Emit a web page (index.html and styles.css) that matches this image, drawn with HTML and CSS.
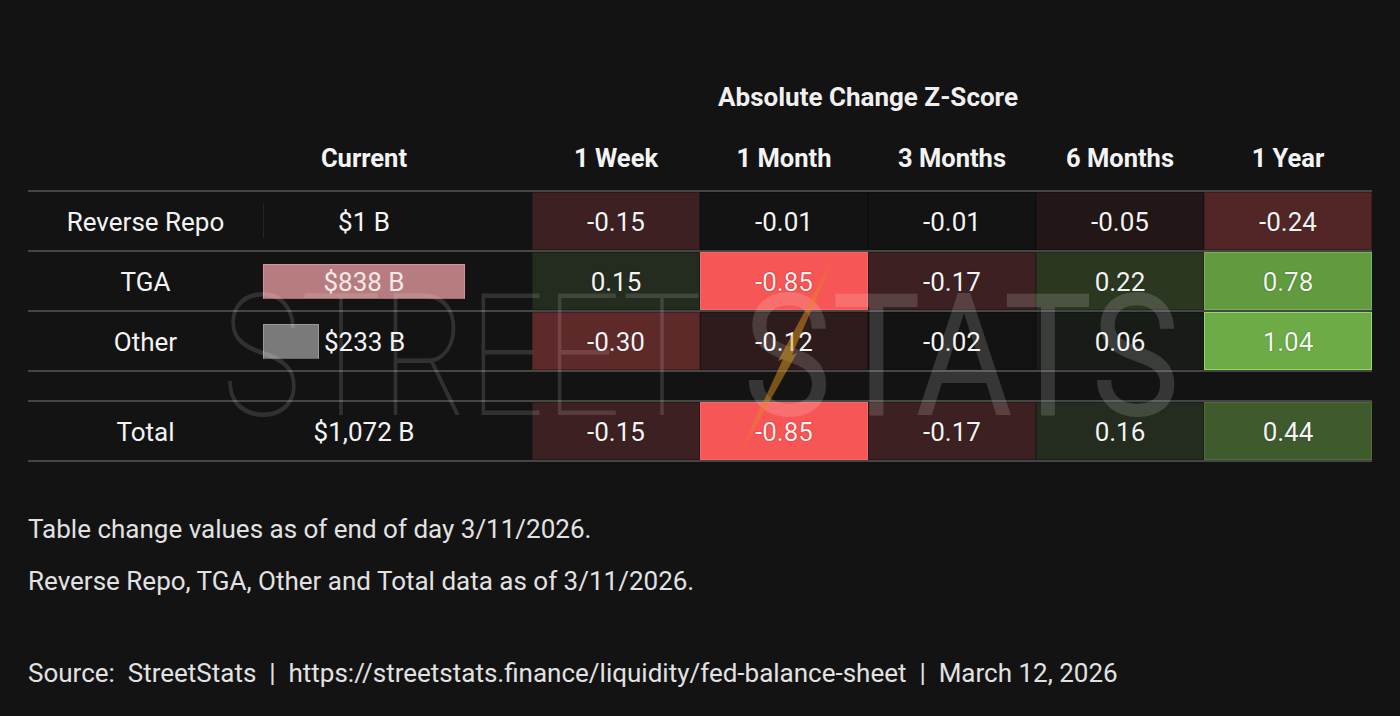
FILE: index.html
```html
<!DOCTYPE html>
<html lang="en">
<head>
<meta charset="utf-8">
<title>Fed Balance Sheet Liquidity</title>
<link rel="stylesheet" href="styles.css">
</head>
<body>
<div class="page">
  <div class="table-wrap">
    <div class="row title-row">
      <div class="title">Absolute Change Z-Score</div>
    </div>
    <div class="row head-row">
      <div class="cell"></div>
      <div class="cell">Current</div>
      <div class="cell"></div>
      <div class="cell">1 Week</div>
      <div class="cell">1 Month</div>
      <div class="cell">3 Months</div>
      <div class="cell">6 Months</div>
      <div class="cell">1 Year</div>
    </div>

    <div class="row data-row">
      <div class="cell label">Reverse Repo</div>
      <div class="cell current"><span class="zero-bar"></span><span class="cur-text">$1 B</span></div>
      <div class="cell"></div>
      <div class="cell z z-neg2">-0.15</div>
      <div class="cell z z-neu">-0.01</div>
      <div class="cell z z-neu">-0.01</div>
      <div class="cell z z-neg1">-0.05</div>
      <div class="cell z z-neg3">-0.24</div>
    </div>

    <div class="row data-row">
      <div class="cell label">TGA</div>
      <div class="cell current"><span class="bar bar-pink">$838 B</span></div>
      <div class="cell"></div>
      <div class="cell z z-pos1">0.15</div>
      <div class="cell z z-negmax">-0.85</div>
      <div class="cell z z-neg2">-0.17</div>
      <div class="cell z z-pos2">0.22</div>
      <div class="cell z z-pos4">0.78</div>
    </div>

    <div class="row data-row">
      <div class="cell label">Other</div>
      <div class="cell current start"><span class="bar bar-gray"></span><span class="cur-text">$233 B</span></div>
      <div class="cell"></div>
      <div class="cell z z-neg4">-0.30</div>
      <div class="cell z z-neg2b">-0.12</div>
      <div class="cell z z-neu">-0.02</div>
      <div class="cell z z-pos0">0.06</div>
      <div class="cell z z-pos5">1.04</div>
    </div>

    <div class="row spacer-row"></div>

    <div class="row data-row last">
      <div class="cell label">Total</div>
      <div class="cell current"><span class="cur-text">$1,072 B</span></div>
      <div class="cell"></div>
      <div class="cell z z-neg2">-0.15</div>
      <div class="cell z z-negmax">-0.85</div>
      <div class="cell z z-neg2">-0.17</div>
      <div class="cell z z-pos1">0.16</div>
      <div class="cell z z-pos3">0.44</div>
    </div>

    <svg class="watermark" width="1400" height="500" viewBox="0 0 1400 500" aria-hidden="true">
      <defs>
        <linearGradient id="bolt" x1="0" y1="1" x2="0" y2="0">
          <stop offset="0" stop-color="#f36a2a"/>
          <stop offset="0.5" stop-color="#d9a21c"/>
          <stop offset="1" stop-color="#f36a2a"/>
        </linearGradient>
      </defs>
      <text x="222" y="343" class="wm-thin" textLength="480" lengthAdjust="spacingAndGlyphs">STREET</text>
      <text x="743" y="343" class="wm-bold" textLength="437" lengthAdjust="spacingAndGlyphs">STATS</text>
      <polygon points="836,181 792,283 797,281 737,387 783,287 778,289" fill="url(#bolt)" opacity="0.5"/>
    </svg>
  </div>

  <div class="notes">
    <p>Table change values as of end of day 3/11/2026.</p>
    <p>Reverse Repo, TGA, Other and Total data as of 3/11/2026.</p>
  </div>
  <p class="source">Source:&nbsp; StreetStats &nbsp;|&nbsp; https://streetstats.finance/liquidity/fed-balance-sheet &nbsp;|&nbsp; March 12, 2026</p>
</div>
</body>
</html>
```

FILE: styles.css
```css
html, body {
  margin: 0;
  padding: 0;
  background: #131313;
}

body {
  font-family: Roboto, "Liberation Sans", sans-serif;
  color: #f2f2f2;
  width: 1400px;
  height: 716px;
  overflow: hidden;
}

.page {
  padding: 72px 28px 0 28px;
}

.table-wrap {
  position: relative;
  width: 1344px;
}

.row {
  display: grid;
  grid-template-columns: 235px 202px 67px repeat(5, 168px);
}

.title-row {
  height: 50px;
  align-items: center;
}

.title {
  grid-column: 4 / 8;
  text-align: center;
  font-weight: 700;
  font-size: 26px;
  color: #f0f0f0;
}

.head-row {
  height: 68px;
  align-items: center;
  padding-top: 2px;
  box-sizing: border-box;
  font-weight: 700;
  color: #f0f0f0;
}

.head-row .cell {
  text-align: center;
  font-size: 25.5px;
}

.data-row {
  border-top: 2px solid #454545;
  height: 58px;
}

.data-row.last {
  border-bottom: 2px solid #454545;
}

.spacer-row {
  border-top: 2px solid #454545;
  height: 28px;
}

.cell {
  display: flex;
  align-items: center;
  justify-content: center;
  font-size: 26px;
  padding-top: 2px;
  box-sizing: border-box;
  color: #f4f4f4;
}

.current {
  position: relative;
  justify-content: center;
  padding-top: 0;
}

.current .cur-text {
  padding-top: 2px;
}

.current.start {
  justify-content: flex-start;
  gap: 5px;
}

.zero-bar {
  position: absolute;
  left: 0;
  top: 12px;
  width: 1px;
  height: 34px;
  background: #2a2220;
}

.bar {
  display: flex;
  align-items: center;
  justify-content: center;
  height: 35px;
  padding-top: 2px;
  box-sizing: border-box;
}

.bar-pink {
  width: 202px;
  background: #b77c7f;
  border: 1px solid #d49397;
  border-bottom-color: #9d6a6d;
  color: #f6e8e8;
}

.bar-gray {
  width: 56px;
  background: #7a7a7a;
  border: 1px solid #9a9a9a;
  border-bottom-color: #666;
}

.z {
  border: 1px solid rgba(0, 0, 0, 0.25);
  text-shadow: 0 0 1px rgba(0, 0, 0, 0.6);
}

.z-neu { background: #141313; }
.z-neg1 { background: #221716; }
.z-neg2 { background: #3d2021; }
.z-neg2b { background: #2e1b1b; }
.z-neg3 { background: #522626; }
.z-neg4 { background: #5e2929; }
.z-negmax {
  background: #f65656;
  border-color: #f46a6a;
  text-shadow: 0 0 1px #e01010, 0 0 1px #e01010;
}
.z-pos0 { background: #181c17; }
.z-pos1 { background: #232c1e; }
.z-pos2 { background: #2c3721; }
.z-pos3 { background: #3f5a2c; border-color: #4d6c37; }
.z-pos4 {
  background: #629a40;
  border-color: #78b255;
  text-shadow: 0 0 1px #2f6a10, 0 0 1px #2f6a10;
}
.z-pos5 {
  background: #6cab45;
  border-color: #9ad56e;
  text-shadow: 0 0 1px #3c7a18, 0 0 1px #3c7a18;
}

.watermark {
  position: absolute;
  left: -28px;
  top: 0;
  pointer-events: none;
}

.wm-thin {
  font-family: Roboto, "Liberation Sans", sans-serif;
  font-weight: 100;
  font-size: 170px;
  fill: rgba(255, 255, 255, 0.13);
}

.wm-bold {
  font-family: Roboto, "Liberation Sans", sans-serif;
  font-weight: 400;
  font-size: 170px;
  fill: rgba(255, 255, 255, 0.15);
}

.notes {
  margin-top: 52px;
}

.notes p {
  margin: 0 0 22px 0;
  font-size: 26px;
  line-height: 30px;
  color: #e2e2e2;
}

.source {
  margin: 62px 0 0 0;
  font-size: 26px;
  line-height: 30px;
  color: #e2e2e2;
  white-space: pre;
}
```
